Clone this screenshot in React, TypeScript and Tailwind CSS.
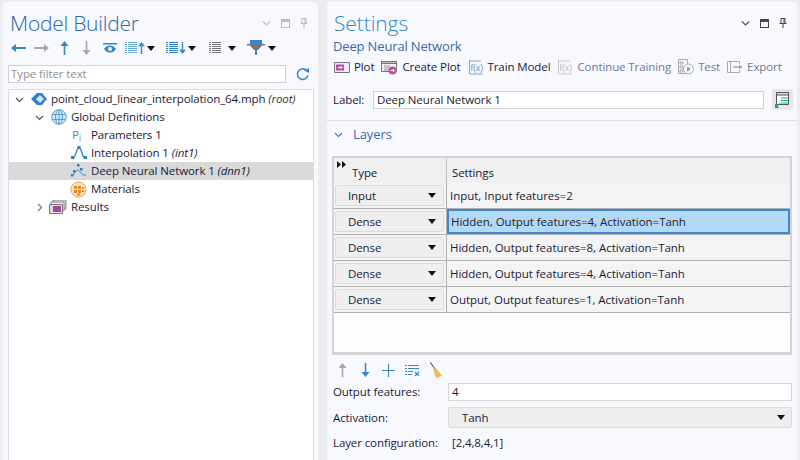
import React from 'react';

const BLUE = '#3a87c8';
const GREY = '#a8a8a8';

const Caret = ({ className = '' }: { className?: string }) => (
  <svg width="8" height="5" viewBox="0 0 8 5" className={className}>
    <path d="M0 0h8L4 5z" fill="#111" />
  </svg>
);

const Chevron = ({ open, color = '#555' }: { open: boolean; color?: string }) => (
  <svg width="9" height="9" viewBox="0 0 9 9" fill="none" stroke={color} strokeWidth="1.2">
    {open ? <path d="M1 3l3.5 3.5L8 3" /> : <path d="M3 1l3.5 3.5L3 8" />}
  </svg>
);

const ArrowH = ({ dir, color }: { dir: 'l' | 'r'; color: string }) => (
  <svg width="15" height="10" viewBox="0 0 15 10">
    {dir === 'l' ? <path d="M0 5l5-4v3h10v2H5v3z" fill={color} /> : <path d="M15 5l-5-4v3H0v2h10v3z" fill={color} />}
  </svg>
);

const ArrowV = ({ dir, color, h = 14 }: { dir: 'u' | 'd'; color: string; h?: number }) => (
  <svg width="9" height={h} viewBox="0 0 9 14">
    {dir === 'u' ? <path d="M4.5 0L8.5 5H5.3v9H3.7V5H.5z" fill={color} /> : <path d="M4.5 14L8.5 9H5.3V0H3.7v9H.5z" fill={color} />}
  </svg>
);

const ViewControls = ({ dark }: { dark: boolean }) => {
  const c = dark ? '#444' : '#bbb';
  return (
    <div className="flex items-center gap-[10px]">
      <svg width="9" height="9" viewBox="0 0 9 9" fill="none" stroke={dark ? '#555' : '#c0c0c8'} strokeWidth="1.2">
        <path d="M1 2.5l3.5 3.5L8 2.5" />
      </svg>
      <svg width="9" height="9" viewBox="0 0 9 9" fill="none" stroke={c}>
        <rect x=".5" y=".5" width="8" height="8" />
        <rect x=".5" y=".5" width="8" height="2" fill={c} />
      </svg>
      <svg width="8" height="10" viewBox="0 0 8 10" fill="none" stroke={c}>
        <path d="M2 .5h4v5H2zM.5 5.5h7M4 6v4M5 1v4" />
      </svg>
    </div>
  );
};

const ListIcon = ({ color }: { color: string }) => (
  <svg width="12" height="12" viewBox="0 0 12 12" stroke={color} strokeDasharray="2 1 9 0">
    <path d="M0 .5h12M0 2.5h12M0 4.5h12M0 6.5h12M0 8.5h12M0 10.5h12" />
  </svg>
);

function ModelBuilder() {
  return (
    <div className="flex w-[315px] flex-col rounded-t-[3px] bg-[#f8f9fe]">
      <div className="flex h-[35px] items-end justify-between pl-[7px] pr-[10px]">
        <span className="text-[21px] leading-[28px] font-light tracking-[-0.25px] text-[#2f66ad]">Model Builder</span>
        <div className="mb-[9px]">
          <ViewControls dark={false} />
        </div>
      </div>

      {/* toolbar */}
      <div className="mt-[4px] flex h-[14px] items-center pl-[8px]">
        <ArrowH dir="l" color={BLUE} />
        <div className="ml-[8px]"><ArrowH dir="r" color={GREY} /></div>
        <div className="ml-[11px]"><ArrowV dir="u" color={BLUE} /></div>
        <div className="ml-[13px]"><ArrowV dir="d" color={GREY} /></div>
        <svg className="ml-[12px]" width="14" height="10" viewBox="0 0 14 10">
          <path d="M0 0h14v1.5H0z" fill={BLUE} />
          <path d="M1 6c2-3 4-3.500 6-3.500S11 3 13 6c-2 3-4 3.500-6 3.500S3 9 1 6z" fill={BLUE} />
          <circle cx="7" cy="6" r="2" fill="#f8f9fe" />
        </svg>
        <div className="ml-[8px] flex items-center">
          <ListIcon color="#6aa8dc" />
          <ArrowV dir="u" color={BLUE} h={12} />
          <Caret className="ml-[1px]" />
        </div>
        <div className="ml-[11px] flex items-center">
          <ListIcon color="#2f7fc4" />
          <ArrowV dir="d" color={BLUE} h={12} />
          <Caret className="ml-[1px]" />
        </div>
        <div className="ml-[13px] flex items-center">
          <ListIcon color="#777" />
          <Caret className="ml-[7px]" />
        </div>
        <svg className="ml-[11px]" width="18" height="16" viewBox="0 0 18 16">
          <path d="M3 0h12v4H3z" fill={BLUE} />
          <path d="M0 4h18v1.500h-3L11 10H7L3 5.500H0z" fill="#777" />
          <path d="M8 10h2v5H8z" fill={BLUE} />
        </svg>
        <Caret className="ml-[3px]" />
      </div>

      {/* filter */}
      <div className="mt-[10px] flex items-center pl-[5px]">
        <div className="flex h-[18px] w-[278px] items-center border border-[#d0d0d0] bg-white pl-[2px] text-[#8f8f8f]">
          Type filter text
        </div>
        <svg className="ml-[10px]" width="14" height="14" viewBox="0 0 14 14" fill="none" stroke={BLUE} strokeWidth="1.6">
          <path d="M11.800 8.500A5.300 5.300 0 1 1 10 3" />
          <path d="M8 3.500L13 1v5z" fill={BLUE} stroke="none" />
        </svg>
      </div>

      {/* tree */}
      <div className="mt-[6px] ml-[5px] flex w-[306px] flex-1 flex-col border border-b-0 border-[#dcdcdc] bg-white text-[#1a1a3a]">
        <div className="flex h-[18px] items-center pl-[6px]">
          <Chevron open />
          <svg className="ml-[7px]" width="16" height="12" viewBox="0 0 16 12">
            <path d="M0 6l6-6h5l5 6-5 6H6z" fill="#2f7fc4" />
            <path d="M5 6l4-4 4 4-4 4z" fill="#cfe2f3" />
          </svg>
          <span className="ml-[4px]">point_cloud_linear_interpolation_64.mph <i className="text-[#333]">(root)</i></span>
        </div>
        <div className="flex h-[18px] items-center pl-[26px]">
          <Chevron open />
          <svg className="ml-[7px]" width="16" height="16" viewBox="0 0 16 16" fill="#d4e8f7" stroke="#5aa0d8">
            <circle cx="8" cy="8" r="7.300" />
            <ellipse cx="8" cy="8" rx="3.500" ry="7.300" fill="none" />
            <path d="M1 5.500h14M1 10.500h14M8 1v14" fill="none" />
          </svg>
          <span className="ml-[4px]">Global Definitions</span>
        </div>
        <div className="flex h-[18px] items-center pl-[62px]">
          <span className="w-[19px] pl-[1px] text-[#3a87c8]">P<span className="text-[9px]">¡</span></span>
          <span className="ml-[1px]">Parameters 1</span>
        </div>
        <div className="flex h-[18px] items-center pl-[62px]">
          <svg width="16" height="14" viewBox="0 0 16 14" fill="none">
            <path d="M2 12c3 0 3-10 6-10s3 10 6 10" stroke="#3a87c8" strokeWidth="1.300" />
            <rect x="0" y="10" width="3" height="3" fill="#2f7fc4" />
            <rect x="13" y="10" width="3" height="3" fill="#2f7fc4" />
            <rect x="6.500" y="0" width="3" height="3" fill="#2f7fc4" />
          </svg>
          <span className="ml-[4px]">Interpolation 1 <i>(int1)</i></span>
        </div>
        <div className="flex h-[18px] items-center bg-[#d9d9d9] pl-[62px]">
          <svg width="16" height="14" viewBox="0 0 16 14" fill="none">
            <path d="M1 11c3-1 4-5 6-5s3 6 8 5" stroke="#3a87c8" strokeWidth="1" />
            <rect x="2" y="6" width="2.500" height="2.500" fill="#2f7fc4" />
            <rect x="6" y="0" width="2.500" height="2.500" fill="#2f7fc4" />
            <rect x="0" y="10" width="2.500" height="2.500" fill="#2f7fc4" />
            <rect x="9" y="4" width="2.500" height="2.500" fill="#2f7fc4" />
          </svg>
          <span className="ml-[4px]">Deep Neural Network 1 <i>(dnn1)</i></span>
        </div>
        <div className="flex h-[18px] items-center pl-[61px]">
          <svg width="17" height="17" viewBox="0 0 17 17">
            <circle cx="8.500" cy="8.500" r="7.500" fill="#fde6c4" stroke="#ef9f3a" />
            <path d="M4 5h3v3H4zM8 5h3v3H8zM12 6h2v2h-2zM4 9h3v3H4zM8 9h3v3H8zM12 9h2v2h-2zM7 12.500h3v2H7z" fill="#e8862a" />
          </svg>
          <span className="ml-[4px]">Materials</span>
        </div>
        <div className="flex h-[18px] items-center pl-[26px]">
          <Chevron open={false} color="#777" />
          <svg className="ml-[5px]" width="18" height="15" viewBox="0 0 18 15">
            <path d="M4 0h13v9H4z" fill="#ddd" stroke="#888" />
            <path d="M2 2h13v9H2z" fill="#eee" stroke="#888" />
            <path d="M.500 4.500h13v9H.500z" fill="#ddd" stroke="#777" />
            <path d="M4 6h8v6H4z" fill="#a8469a" />
          </svg>
          <span className="ml-[4px]">Results</span>
        </div>
      </div>
    </div>
  );
}

const ToolButton = ({ icon, label, off }: { icon: React.ReactNode; label: string; off?: boolean }) => (
  <div className={`flex items-center gap-[4px] ${off ? 'text-[#6c7a94]' : 'text-[#1a1a3a]'}`}>
    {icon}
    <span>{label}</span>
  </div>
);

const PlotIcon = () => (
  <svg width="16" height="11" viewBox="0 0 16 11">
    <path d="M.500.500h15v10H.500z" fill="#eee" stroke="#777" />
    <path d="M2 2.500h8v6H2z" fill="#b84fa8" />
    <path d="M4 5.500h4M6.500 4l1.500 1.500L6.500 7" stroke="#fff" fill="none" />
  </svg>
);

const CreatePlotIcon = () => (
  <svg width="17" height="15" viewBox="0 0 17 15">
    <path d="M.500 1.500h15v10H.500z" fill="#f2f2f2" stroke="#777" />
    <path d="M.500 1.500h15v2H.500z" fill="#bbb" stroke="#777" />
    <path d="M3 6h6M3 8h5M3 10h4" stroke="#999" />
    <circle cx="11.500" cy="10.500" r="4" fill="#b84fa8" />
    <path d="M9.500 10.500h4M12 9l1.500 1.500L12 12" stroke="#fff" fill="none" />
  </svg>
);

const TrainIcon = ({ color }: { color: string }) => (
  <svg width="16" height="16" viewBox="0 0 16 16" fill="none" stroke={color}>
    <path d="M1.500 1v14M1.500 15h13M1.500 2h11" strokeWidth=".8" />
    <text x="2.500" y="11.500" fontSize="9" fill={color} stroke="none" fontFamily="Liberation Sans, sans-serif">f(x)</text>
  </svg>
);

const TestIcon = () => (
  <svg width="16" height="16" viewBox="0 0 16 16" fill="none" stroke="#aaa">
    <path d="M.500.500h9v14h-9z" />
    <path d="M2 3h3v2H2zM2 7h3v2H2zM2 11h3v2H2z" />
    <circle cx="10.500" cy="10" r="5" fill="#f8f9fe" />
    <path d="M9 7.500l4 2.500-4 2.500z" fill="#999" stroke="none" />
  </svg>
);

const ExportIcon = () => (
  <svg width="16" height="12" viewBox="0 0 16 12" fill="none" stroke="#aaa">
    <path d="M.500.500h12v2.500M.500.500v11h12V9M3.500.500v11" />
    <path d="M6 6h7" strokeWidth="1.500" />
    <path d="M12 3.500l4 2.500-4 2.500z" fill="#aaa" stroke="none" />
  </svg>
);

const rows = [
  { type: 'Input', text: 'Input, Input features=2' },
  { type: 'Dense', text: 'Hidden, Output features=4, Activation=Tanh', selected: true },
  { type: 'Dense', text: 'Hidden, Output features=8, Activation=Tanh' },
  { type: 'Dense', text: 'Hidden, Output features=4, Activation=Tanh' },
  { type: 'Dense', text: 'Output, Output features=1, Activation=Tanh' },
];

function LayerTable() {
  return (
    <div className="ml-[5px] flex h-[199px] w-[460px] flex-col border-t-2 border-r-2 border-b-[3px] border-l-2 border-[#d4d4d4] bg-[#fdfdff]">
      <div className="flex h-[25px] bg-[#f0f0f0]">
        <div className="relative flex w-[113px] items-end border-r border-[#c4c4c4] pb-[2px] pl-[18px]">
          <svg className="absolute top-[3px] left-[3px]" width="9" height="7" viewBox="0 0 9 7">
            <path d="M0 0l4 3.500L0 7zM5 0l4 3.500L5 7z" fill="#111" />
          </svg>
          Type
        </div>
        <div className="flex flex-1 items-end pb-[2px] pl-[5px]">Settings</div>
      </div>
      {rows.map((row, i) => (
        <div key={i} className="flex h-[26px] border-b border-[#b0b0b0] bg-[#f4f4f4]">
          <div className="flex w-[113px] items-center border-r border-[#b0b0b0] pl-[1px]">
            <div className="flex h-[21px] w-[109px] items-center justify-between rounded-[2px] border border-[#dcdcdc] bg-[#efefef] pr-[7px] pl-[12px]">
              <span>{row.type}</span>
              <Caret />
            </div>
          </div>
          <div className={`flex flex-1 items-center tracking-[-0.03px] ${row.selected ? 'border-2 border-[#3a8ad4] bg-[#b5d9f5] pl-[2px]' : 'pl-[3px]'}`}>
            {row.text}
          </div>
        </div>
      ))}
    </div>
  );
}

function Settings() {
  return (
    <div className="ml-[9px] flex w-[470px] flex-col rounded-t-[3px] bg-[#f8f9fe]">
      <div className="flex h-[35px] items-end justify-between pl-[7px] pr-[10px]">
        <span className="text-[21px] leading-[28px] font-light tracking-[-0.1px] text-[#2e86c9]">Settings</span>
        <div className="mb-[9px]">
          <ViewControls dark />
        </div>
      </div>
      <div className="h-[18px] pl-[6px] text-[13px] leading-[18px] tracking-[-0.15px] text-[#3c68ad]">Deep Neural Network</div>
      <div className="mt-[3px] flex h-[18px] items-center gap-[7px] pl-[7px]">
        <ToolButton icon={<PlotIcon />} label="Plot" />
        <ToolButton icon={<CreatePlotIcon />} label="Create Plot" />
        <ToolButton icon={<TrainIcon color="#6a93c8" />} label="Train Model" />
        <ToolButton icon={<TrainIcon color="#bbb" />} label="Continue Training" off />
        <ToolButton icon={<TestIcon />} label="Test" off />
        <ToolButton icon={<ExportIcon />} label="Export" off />
      </div>

      <div className="mt-[13px] flex h-[21px] items-center pl-[6px]">
        <span className="w-[40px]">Label:</span>
        <div className="flex h-[18px] w-[391px] items-center border border-[#d0d0d0] bg-white pl-[3px]">Deep Neural Network 1</div>
        <div className="ml-[8px] flex h-[21px] w-[21px] items-center justify-center rounded-[2px] bg-[#e6e6e6]">
          <svg width="15" height="17" viewBox="0 0 15 17" fill="none">
            <path d="M1.500 1.500h12v12h-12z" fill="#fff" stroke="#555" />
            <path d="M1.500 1.500h12v2.500h-12z" fill="#ddd" stroke="#555" />
            <path d="M6 7h7M6 9.500h7M6 12h7" stroke="#16a888" />
            <path d="M0 17v-4l4 4zM2 15l3-3" fill="#16a888" stroke="#16a888" />
          </svg>
        </div>
      </div>

      <div className="mt-[10px] border-t border-[#dedede]" />
      <div className="flex h-[26px] items-center pl-[7px] text-[#3c68ad]">
        <Chevron open color="#4a78b8" />
        <span className="ml-[10px] text-[13px] tracking-[-0.1px]">Layers</span>
      </div>
      <div className="mt-[9px]">
        <LayerTable />
      </div>

      <div className="mt-[7px] flex h-[16px] items-center pl-[11px]">
        <ArrowV dir="u" color={GREY} />
        <div className="ml-[14px]"><ArrowV dir="d" color={BLUE} /></div>
        <svg className="ml-[12px]" width="13" height="13" viewBox="0 0 13 13" stroke={BLUE} strokeWidth="1.200">
          <path d="M6.500 0v13M0 6.500h13" />
        </svg>
        <svg className="ml-[10px]" width="15" height="13" viewBox="0 0 15 13" stroke={BLUE}>
          <path d="M0 1.500h14M0 4.500h14M0 7.500h8M0 10.500h7" strokeDasharray="2 1 11 0" />
          <path d="M10 8l4 4M14 8l-4 4" strokeWidth="1.300" />
        </svg>
        <svg className="ml-[10px]" width="12" height="16" viewBox="0 0 12 16">
          <path d="M0 0l5 7" stroke="#666" strokeWidth="1.200" />
          <path d="M3 7l3-1 6 8-6 2z" fill="#f4b560" />
        </svg>
      </div>

      <div className="mt-[5px] flex h-[18px] items-center pl-[6px]">
        <span className="w-[115px]">Output features:</span>
        <div className="flex h-[18px] w-[344px] items-center border border-[#d6d6d6] bg-white pl-[3px]">4</div>
      </div>
      <div className="mt-[6px] flex h-[21px] items-center pl-[6px]">
        <span className="w-[115px]">Activation:</span>
        <div className="flex h-[21px] w-[344px] items-center justify-between rounded-[2px] border border-[#dcdcdc] bg-[#efefef] pr-[6px] pl-[13px]">
          <span>Tanh</span>
          <Caret />
        </div>
      </div>
      <div className="mt-[6px] flex h-[18px] items-center pl-[6px]">
        <span className="w-[119px]">Layer configuration:</span>
        <span>[2,4,8,4,1]</span>
      </div>
    </div>
  );
}

export default function App() {
  return (
    <div className="flex h-[460px] w-[800px] overflow-hidden bg-[#ecedf0] pt-[2px] pl-[3px] text-[11.5px] leading-[16px] tracking-[-0.1px] text-[#1a1a3a] [font-family:'Open_Sans',sans-serif]">
      <ModelBuilder />
      <Settings />
    </div>
  );
}
